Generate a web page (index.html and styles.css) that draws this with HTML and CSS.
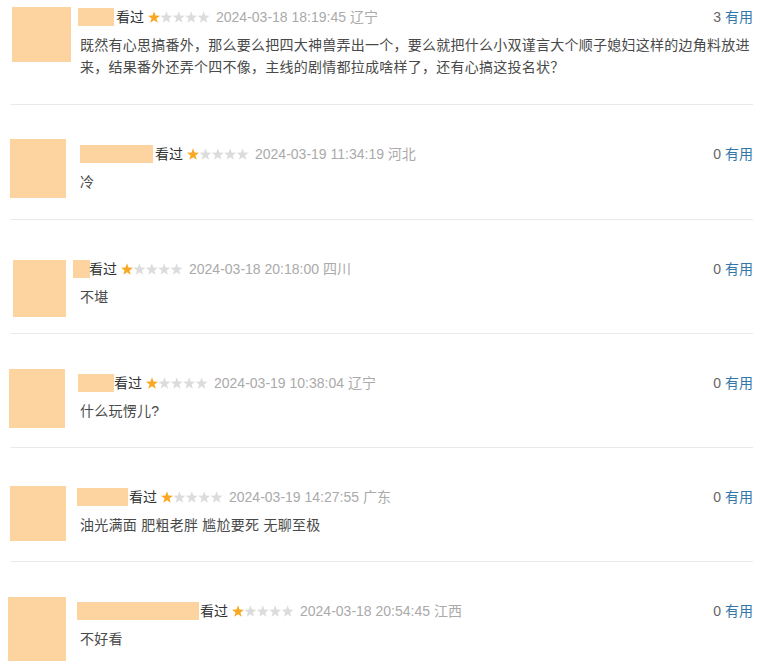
FILE: index.html
```html
<!DOCTYPE html>
<html lang="zh-CN">
<head>
    <meta charset="UTF-8">
    <meta name="viewport" content="width=device-width, initial-scale=1.0">
    <title>短评</title>
    <link rel="stylesheet" href="styles.css">
</head>
<body>
    <svg class="defs" width="0" height="0">
        <defs>
            <polygon id="star" points="6,0.3 7.53,4.5 11.99,4.65 8.47,7.4 9.7,11.7 6,9.2 2.3,11.7 3.53,7.4 0.01,4.65 4.47,4.5"/>
        </defs>
    </svg>

    <div class="comments">
        <div class="comment">
            <div class="side"><div class="avatar"></div></div>
            <div class="main">
                <div class="info">
                    <span class="mask" style="width:36px"></span>
                    <span class="status">看过</span>
                    <svg class="rating" width="62" height="12" viewBox="0 0 62 12">
                        <use href="#star" class="on"/>
                        <use href="#star" x="12.4"/>
                        <use href="#star" x="24.8"/>
                        <use href="#star" x="37.2"/>
                        <use href="#star" x="49.6"/>
                    </svg>
                    <span class="time">2024-03-18 18:19:45 辽宁</span>
                    <span class="votes">3 <a href="#">有用</a></span>
                </div>
                <p class="short">既然有心思搞番外，那么要么把四大神兽弄出一个，要么就把什么小双谨言大个顺子媳妇这样的边角料放进来，结果番外还弄个四不像，主线的剧情都拉成啥样了，还有心搞这投名状？</p>
            </div>
        </div>

        <div class="comment">
            <div class="side"><div class="avatar"></div></div>
            <div class="main">
                <div class="info">
                    <span class="mask" style="width:73px"></span>
                    <span class="status">看过</span>
                    <svg class="rating" width="62" height="12" viewBox="0 0 62 12">
                        <use href="#star" class="on"/>
                        <use href="#star" x="12.4"/>
                        <use href="#star" x="24.8"/>
                        <use href="#star" x="37.2"/>
                        <use href="#star" x="49.6"/>
                    </svg>
                    <span class="time">2024-03-19 11:34:19 河北</span>
                    <span class="votes">0 <a href="#">有用</a></span>
                </div>
                <p class="short">冷</p>
            </div>
        </div>

        <div class="comment">
            <div class="side"><div class="avatar"></div></div>
            <div class="main">
                <div class="info">
                    <span class="mask" style="width:17px"></span>
                    <span class="status">看过</span>
                    <svg class="rating" width="62" height="12" viewBox="0 0 62 12">
                        <use href="#star" class="on"/>
                        <use href="#star" x="12.4"/>
                        <use href="#star" x="24.8"/>
                        <use href="#star" x="37.2"/>
                        <use href="#star" x="49.6"/>
                    </svg>
                    <span class="time">2024-03-18 20:18:00 四川</span>
                    <span class="votes">0 <a href="#">有用</a></span>
                </div>
                <p class="short">不堪</p>
            </div>
        </div>

        <div class="comment">
            <div class="side"><div class="avatar"></div></div>
            <div class="main">
                <div class="info">
                    <span class="mask" style="width:36px"></span>
                    <span class="status">看过</span>
                    <svg class="rating" width="62" height="12" viewBox="0 0 62 12">
                        <use href="#star" class="on"/>
                        <use href="#star" x="12.4"/>
                        <use href="#star" x="24.8"/>
                        <use href="#star" x="37.2"/>
                        <use href="#star" x="49.6"/>
                    </svg>
                    <span class="time">2024-03-19 10:38:04 辽宁</span>
                    <span class="votes">0 <a href="#">有用</a></span>
                </div>
                <p class="short">什么玩愣儿?</p>
            </div>
        </div>

        <div class="comment">
            <div class="side"><div class="avatar"></div></div>
            <div class="main">
                <div class="info">
                    <span class="mask" style="width:51px"></span>
                    <span class="status">看过</span>
                    <svg class="rating" width="62" height="12" viewBox="0 0 62 12">
                        <use href="#star" class="on"/>
                        <use href="#star" x="12.4"/>
                        <use href="#star" x="24.8"/>
                        <use href="#star" x="37.2"/>
                        <use href="#star" x="49.6"/>
                    </svg>
                    <span class="time">2024-03-19 14:27:55 广东</span>
                    <span class="votes">0 <a href="#">有用</a></span>
                </div>
                <p class="short">油光满面 肥粗老胖 尴尬要死 无聊至极</p>
            </div>
        </div>

        <div class="comment">
            <div class="side"><div class="avatar"></div></div>
            <div class="main">
                <div class="info">
                    <span class="mask" style="width:122px"></span>
                    <span class="status">看过</span>
                    <svg class="rating" width="62" height="12" viewBox="0 0 62 12">
                        <use href="#star" class="on"/>
                        <use href="#star" x="12.4"/>
                        <use href="#star" x="24.8"/>
                        <use href="#star" x="37.2"/>
                        <use href="#star" x="49.6"/>
                    </svg>
                    <span class="time">2024-03-18 20:54:45 江西</span>
                    <span class="votes">0 <a href="#">有用</a></span>
                </div>
                <p class="short">不好看</p>
            </div>
        </div>
    </div>
</body>
</html>
```

FILE: styles.css
```css
html {
    overflow: hidden;
}
body {
    margin: 0;
    background: #fff;
    color: #494949;
    font-family: "Liberation Sans", Arial, "Noto Sans CJK SC", sans-serif;
    font-size: 14px;
}
.defs {
    position: absolute;
}
.comments {
    width: 742px;
    margin-left: 11px;
}
.comment {
    display: flex;
    padding: 38px 0 25px;
    border-bottom: 1px solid #eaeaea;
}
.comment:first-child {
    padding: 6px 0 26px;
}
.comment:nth-child(2) {
    padding-bottom: 26px;
}
/* the avatar may poke out of its box, it should not stretch the row */
.side {
    width: 69px;
    height: 50px;
    flex: none;
}
.avatar {
    width: 56px;
    height: 58px;
    margin: -2px 0 0 -1px;
    background: #fdd39f;
}
.comment:nth-child(1) .avatar { width: 59px; height: 55px; margin: 1px 0 0 1px; }
.comment:nth-child(2) .avatar { height: 59px; margin-top: -4px; }
.comment:nth-child(3) .avatar { width: 53px; height: 57px; margin: 2px 0 0 2px; }
.comment:nth-child(4) .avatar { height: 59px; margin: -3px 0 0 -2px; }
.comment:nth-child(5) .avatar { height: 55px; margin-top: 0; }
.comment:nth-child(6) .avatar { width: 58px; height: 64px; margin: -3px 0 0 -3px; }
.main {
    flex: 1;
    min-width: 0;
}
.info {
    display: flex;
    align-items: center;
    height: 22px;
    line-height: 22px;
}
.mask {
    height: 18px;
    margin-left: -2px;
    margin-right: 2px;
    background: #fdd39f;
}
.comment:nth-child(2) .mask { margin-left: 0; }
.comment:nth-child(3) .mask { margin: 0 -1px 0 -7px; }
.comment:nth-child(4) .mask { margin-right: 0; }
.comment:nth-child(5) .mask,
.comment:nth-child(6) .mask { margin-left: -3px; margin-right: 1px; }
.status {
    color: #333;
}
.rating {
    margin: 0 6px 0 4px;
    fill: #dcdcdc;
}
.rating .on {
    fill: #f9a825;
}
.time {
    color: #aaa;
}
.votes {
    margin-left: auto;
    color: #666;
}
.votes a {
    color: #37a;
    text-decoration: none;
}
.short {
    margin: 6px 0 0;
    line-height: 22px;
    letter-spacing: 0.25px;
    color: #494949;
}
```
